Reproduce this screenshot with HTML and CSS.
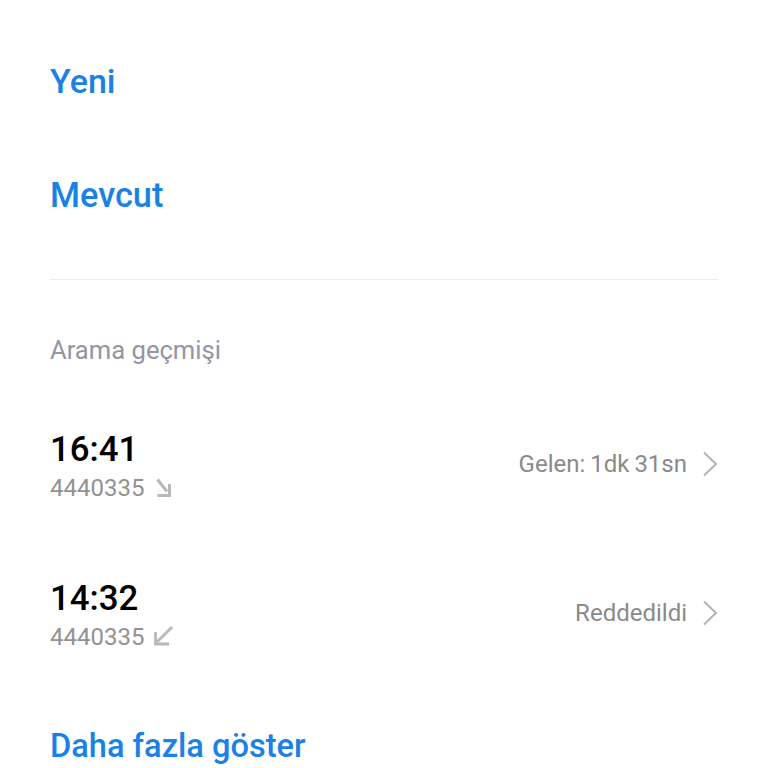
FILE: index.html
```html
<!DOCTYPE html>
<html lang="tr">
<head>
    <meta charset="UTF-8">
    <meta name="viewport" content="width=device-width, initial-scale=1.0">
    <title>Arama geçmişi</title>
    <link rel="stylesheet" href="styles.css">
</head>
<body>
    <div class="page">
        <div class="actions">
            <div class="action action-new">Yeni</div>
            <div class="action action-existing">Mevcut</div>
        </div>

        <div class="history">
            <h2 class="history-title">Arama geçmişi</h2>

            <div class="call">
                <div class="call-main">
                    <div class="call-time">16:41</div>
                    <div class="call-number">
                        <span>4440335</span>
                        <svg class="call-icon" width="18" height="20" viewBox="0 0 18 20">
                            <path d="M3.5 1.5 L13 13.5" fill="none" stroke="#b8b8b8" stroke-width="3"/>
                            <path d="M15.5 6 V17.5 H3.5" fill="none" stroke="#b8b8b8" stroke-width="3"/>
                        </svg>
                    </div>
                </div>
                <div class="call-status call-status-incoming">Gelen: 1dk 31sn</div>
                <svg class="chevron" width="16" height="26" viewBox="0 0 16 26">
                    <path d="M2 1.5 L14 13 L2 24.5" fill="none" stroke="#b0b0b0" stroke-width="1.8"/>
                </svg>
            </div>

            <div class="call">
                <div class="call-main">
                    <div class="call-time">14:32</div>
                    <div class="call-number">
                        <span>4440335</span>
                        <svg class="call-icon call-icon-missed" width="22" height="22" viewBox="0 0 22 22">
                            <path d="M20 1 L5 16" fill="none" stroke="#b8b8b8" stroke-width="2.8"/>
                            <path d="M3.5 6 V18 H17" fill="none" stroke="#b8b8b8" stroke-width="2.8"/>
                        </svg>
                    </div>
                </div>
                <div class="call-status">Reddedildi</div>
                <svg class="chevron" width="16" height="26" viewBox="0 0 16 26">
                    <path d="M2 1.5 L14 13 L2 24.5" fill="none" stroke="#b0b0b0" stroke-width="1.8"/>
                </svg>
            </div>

            <div class="more">Daha fazla göster</div>
        </div>
    </div>
</body>
</html>
```

FILE: styles.css
```css
* {
    margin: 0;
    padding: 0;
    box-sizing: border-box;
}

html, body {
    height: 768px;
    overflow: hidden;
}

body {
    font-family: Roboto, 'Noto Sans', sans-serif;
    background: #ffffff;
}

.page {
    padding: 0 50px;
}

.actions {
    height: 280px;
    border-bottom: 1px solid #ececec;
    padding-top: 60px;
}

.action {
    color: #1a82e6;
    font-size: 34px;
    font-weight: 500;
    line-height: 42px;
}

.action-existing {
    margin-top: 72px;
    font-size: 34.3px;
}

.history-title {
    margin-top: 54px;
    color: #9296a6;
    font-size: 25.6px;
    font-weight: 400;
    line-height: 32px;
}

.call {
    display: flex;
    align-items: center;
    height: 80px;
    margin-bottom: 69px;
}

.history-title + .call {
    margin-top: 58px;
}

.call-main {
    flex: 1;
}

.call-time {
    color: #000000;
    font-size: 34.8px;
    font-weight: 500;
    line-height: 40px;
}

.call-number {
    display: flex;
    align-items: center;
    gap: 10px;
    margin-top: 4px;
    margin-bottom: -4px;
    color: #929292;
    font-size: 24px;
    line-height: 30px;
}

.call-icon-missed {
    margin-left: -2px;
}

.call-status {
    color: #8a8a8a;
    font-size: 24px;
    margin-right: 15px;
}

.call-status-incoming {
    word-spacing: -1px;
}

.chevron {
    flex-shrink: 0;
}

.more {
    margin-top: 72px;
    color: #1a82e6;
    font-size: 32.6px;
    font-weight: 500;
    line-height: 42px;
}
```
